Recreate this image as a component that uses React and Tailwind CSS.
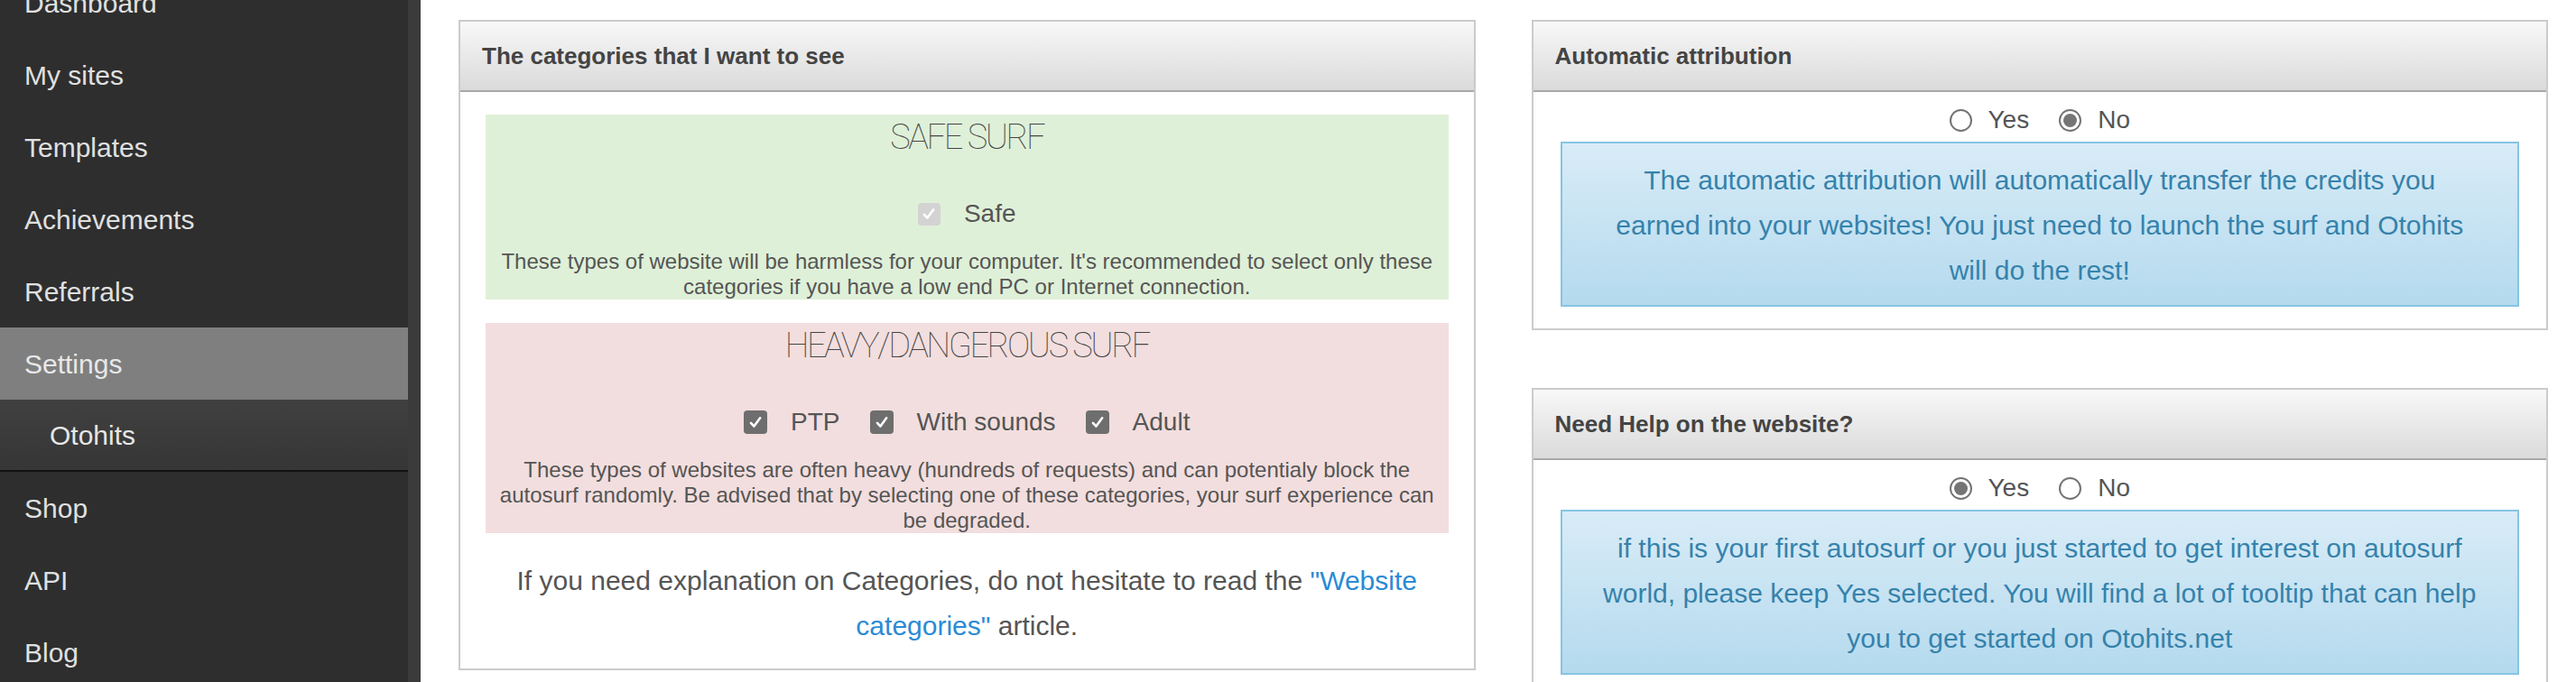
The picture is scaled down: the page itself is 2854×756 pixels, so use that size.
import React from 'react';

const NAV = [
  { label: 'Dashboard' },
  { label: 'My sites' },
  { label: 'Templates' },
  { label: 'Achievements' },
  { label: 'Referrals' },
  { label: 'Settings', active: true },
  { label: 'Otohits', sub: true },
  { label: 'Shop' },
  { label: 'API' },
  { label: 'Blog' },
];

function Sidebar() {
  return (
    <aside className="w-[466px] shrink-0 bg-[#2e2e2e] border-r-[14px] border-[#3b3b3b] overflow-hidden">
      <ul className="-mt-[37px]">
        {NAV.map((item) => {
          if (item.active) {
            return (
              <li key={item.label} className="h-[80px] flex items-center px-[27px] bg-[#7f7f7f] text-[#e8e8e8]">
                {item.label}
              </li>
            );
          }
          if (item.sub) {
            return (
              <li key={item.label} className="h-[80px] flex items-center pl-[55px] bg-linear-to-b from-[#404040] to-[#363636] border-b-2 border-[#111] text-[#e6e6e6]">
                {item.label}
              </li>
            );
          }
          return (
            <li key={item.label} className="h-[80px] flex items-center px-[27px] text-[#e0e0e0]">
              {item.label}
            </li>
          );
        })}
      </ul>
    </aside>
  );
}

function Panel({ title, children }) {
  return (
    <div className="border-2 border-[#cbcbcb] bg-white">
      <div className="h-[78px] flex items-center px-[24px] border-b-2 border-[#a8a8a8] bg-linear-to-b from-[#f8f8f8] to-[#dadada] text-[26px] font-bold text-[#444]">
        {title}
      </div>
      {children}
    </div>
  );
}

function Check({ disabled }) {
  return (
    <span className={disabled ? 'flex h-[25px] w-[25px] items-center justify-center rounded-[4px] bg-[#d3d3d3]' : 'flex h-[26px] w-[26px] items-center justify-center rounded-[4px] bg-[#6e6e6e]'}>
      <svg viewBox="0 0 16 16" className="h-[18px] w-[18px]">
        <path d="M3.5 8.8 L6.6 12 L12.6 3.8" fill="none" stroke="#fff" strokeWidth="2.3" strokeLinecap="round" strokeLinejoin="round" />
      </svg>
    </span>
  );
}

function Radio({ checked }) {
  return (
    <span className="flex h-[25px] w-[25px] items-center justify-center rounded-full border-[2px] border-[#737373] bg-white">
      {checked && <span className="h-[15px] w-[15px] rounded-full bg-[#757575]" />}
    </span>
  );
}

function CategoryBox({ title, tone, items, children }) {
  return (
    <div className={tone === 'safe' ? 'bg-[#dff0d8]' : 'bg-[#f2dede]'}>
      <h3 className="h-[50px] leading-[50px] text-center font-['Roboto',sans-serif] font-thin text-[38px] tracking-[-0.065em] text-[#444]">
        {title}
      </h3>
      <div className="mt-[40px] h-[40px] flex items-center justify-center gap-[33px] text-[28px] text-[#555]">
        {items.map((it) => (
          <label key={it.label} className="flex items-center gap-[26px]">
            <Check disabled={it.disabled} />
            {it.label}
          </label>
        ))}
      </div>
      <p className="mt-[19px] text-center text-[24px] leading-[28px] text-[#555]">{children}</p>
    </div>
  );
}

function YesNo({ value }) {
  return (
    <div className="pt-[15px] h-[47px] flex items-center justify-center gap-[33px] text-[28px] text-[#555]">
      <label className="flex items-center gap-[18px]">
        <Radio checked={value === 'yes'} />
        Yes
      </label>
      <label className="flex items-center gap-[18px]">
        <Radio checked={value === 'no'} />
        No
      </label>
    </div>
  );
}

function InfoAlert({ children }) {
  return (
    <div className="mt-[8px] border-2 border-[#86c4e3] bg-linear-to-b from-[#d9ecf7] to-[#b4daee] px-[42px] pt-[16px] pb-[13px] text-center text-[30px] leading-[50px] text-[#3682ab]">
      {children}
    </div>
  );
}

export default function App() {
  return (
    <div className="flex min-h-screen bg-white font-['Liberation_Sans',Arial,sans-serif] text-[30px]">
      <Sidebar />
      <main className="flex-1 flex items-start gap-[62px] pl-[42px] pr-[31px] pt-[22px]">
        <section className="flex-1">
          <Panel title="The categories that I want to see">
            <div className="px-[28px] pt-[25px] pb-[22px]">
              <CategoryBox title="SAFE SURF" tone="safe" items={[{ label: 'Safe', disabled: true }]}>
                These types of website will be harmless for your computer. It's recommended to select only these categories if you have a low end PC or Internet connection.
              </CategoryBox>
              <div className="mt-[26px]">
                <CategoryBox
                  title="HEAVY/DANGEROUS SURF"
                  tone="danger"
                  items={[{ label: 'PTP' }, { label: 'With sounds' }, { label: 'Adult' }]}
                >
                  These types of websites are often heavy (hundreds of requests) and can potentialy block the autosurf randomly. Be advised that by selecting one of these categories, your surf experience can be degraded.
                </CategoryBox>
              </div>
              <p className="mt-[28px] px-[20px] text-center text-[30px] leading-[50px] text-[#555]">
                If you need explanation on Categories, do not hesitate to read the{' '}
                <a href="#" className="text-[#2a8bd5]">"Website categories"</a> article.
              </p>
            </div>
          </Panel>
        </section>

        <section className="flex-1 flex flex-col gap-[64px]">
          <Panel title="Automatic attribution">
            <div className="px-[30px] pb-[24px]">
              <YesNo value="no" />
              <InfoAlert>
                The automatic attribution will automatically transfer the credits you earned into your websites! You just need to launch the surf and Otohits will do the rest!
              </InfoAlert>
            </div>
          </Panel>
          <Panel title="Need Help on the website?">
            <div className="px-[30px] pb-[24px]">
              <YesNo value="yes" />
              <InfoAlert>
                if this is your first autosurf or you just started to get interest on autosurf world, please keep Yes selected. You will find a lot of tooltip that can help you to get started on Otohits.net
              </InfoAlert>
            </div>
          </Panel>
        </section>
      </main>
    </div>
  );
}
